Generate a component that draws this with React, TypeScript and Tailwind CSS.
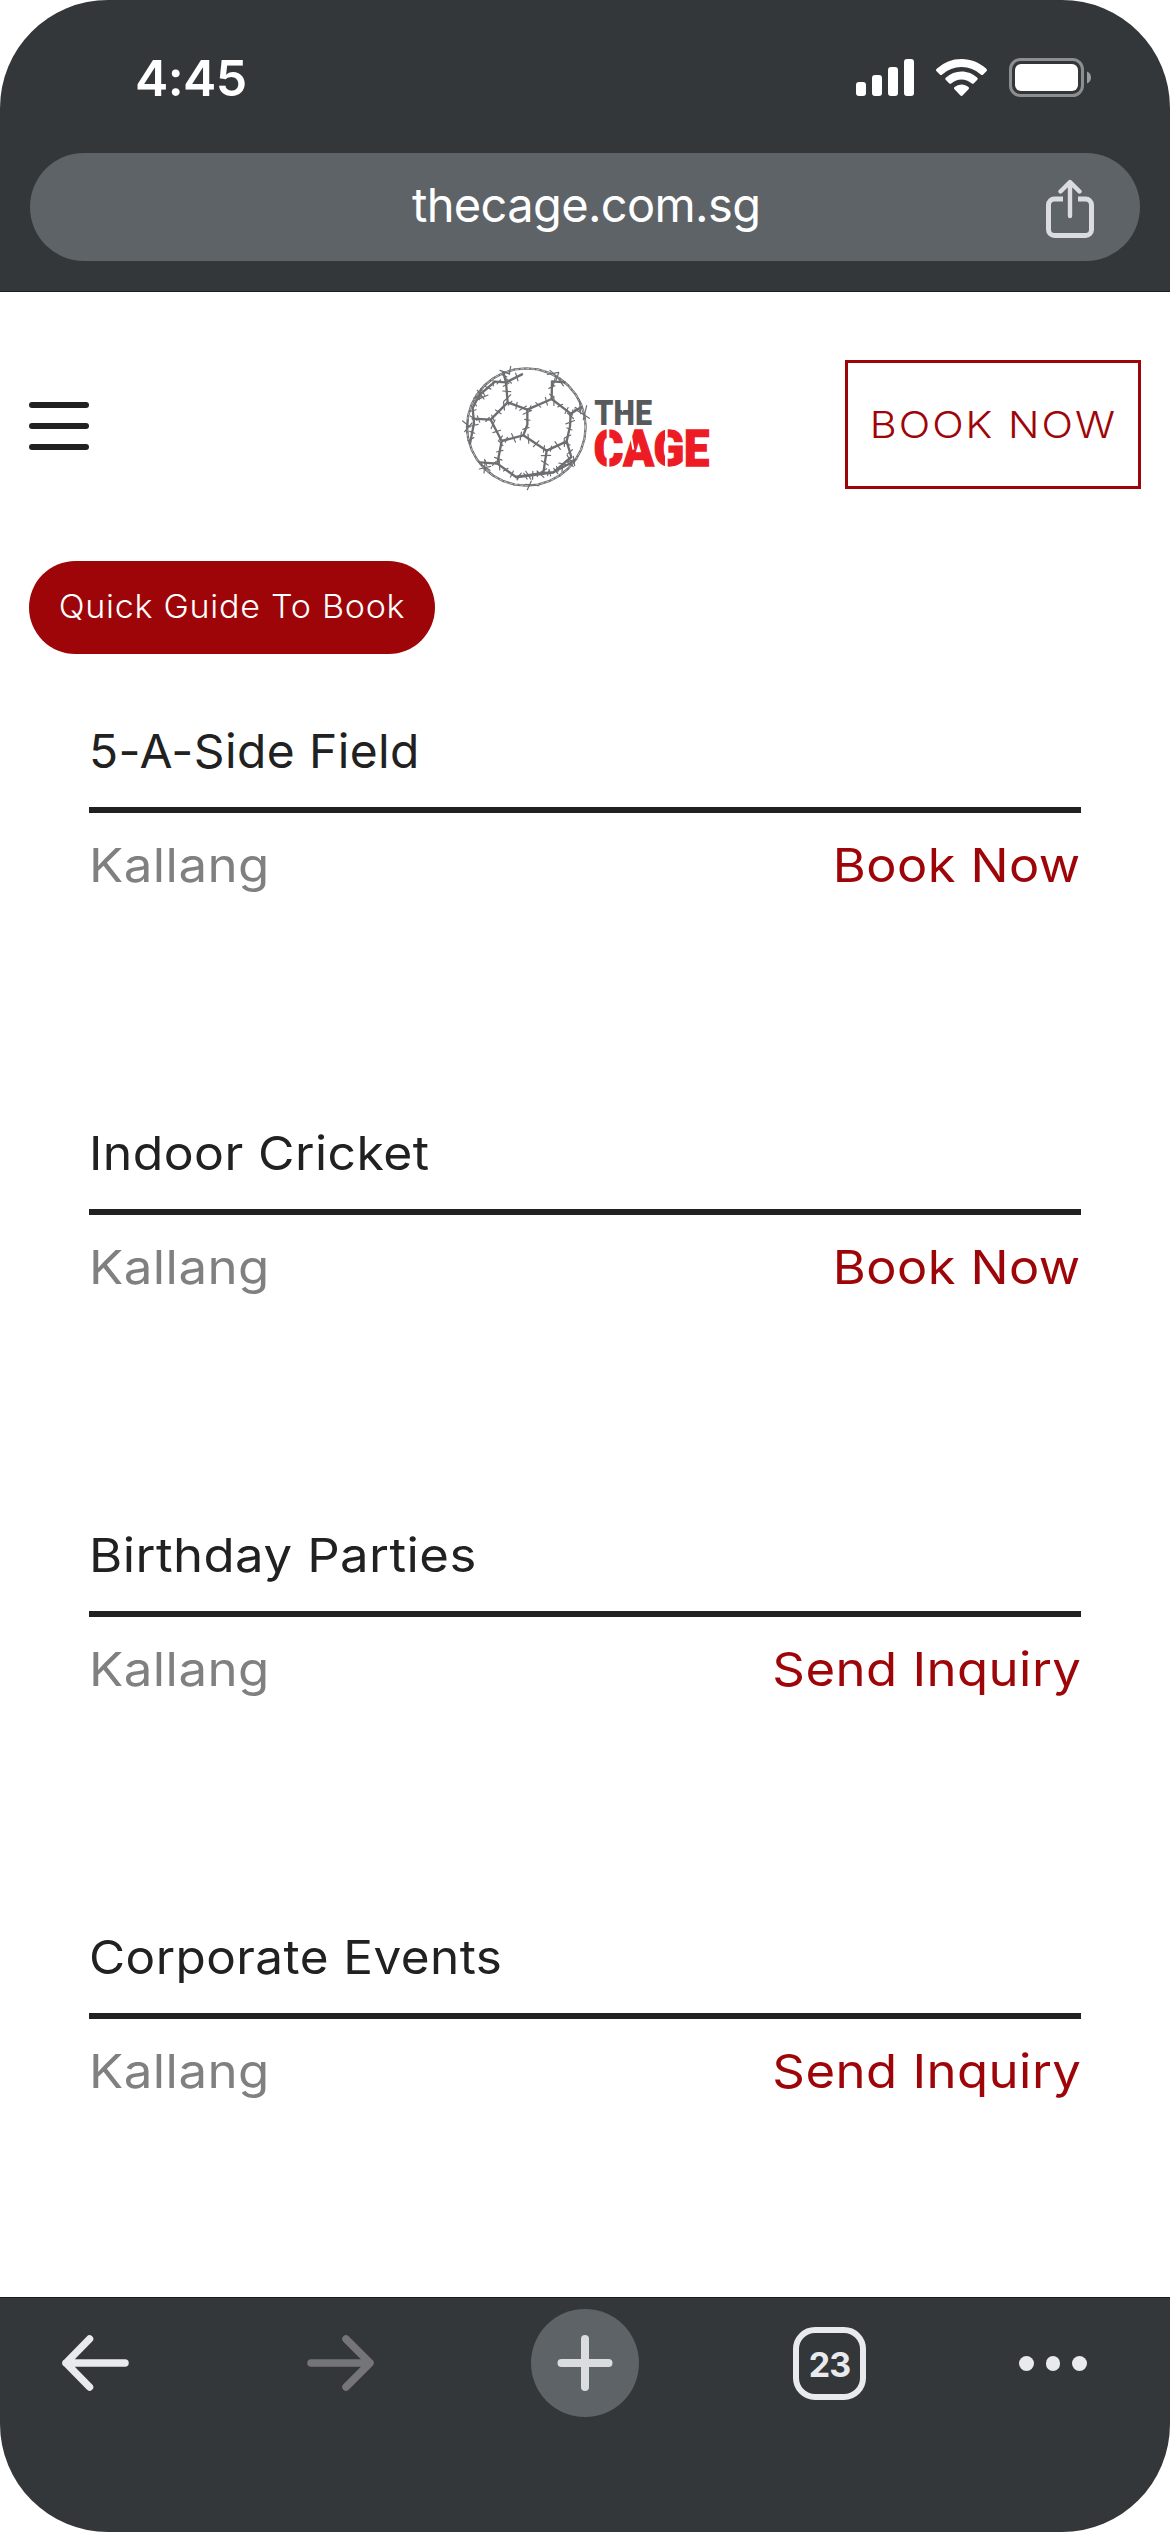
/* ============================================================================
   The Cage — mobile booking page, shown inside the phone's browser.
   ============================================================================ */

type Venue = { title: string; place: string; action: string };

const venues: Venue[] = [
  { title: "5-A-Side Field", place: "Kallang", action: "Book Now" },
  { title: "Indoor Cricket", place: "Kallang", action: "Book Now" },
  { title: "Birthday Parties", place: "Kallang", action: "Send Inquiry" },
  { title: "Corporate Events", place: "Kallang", action: "Send Inquiry" },
];

const stretch: Record<string, string> = {
  "5-A-Side Field": "scale-x-[1.02]",
  "Indoor Cricket": "scale-x-[1.062]",
  "Birthday Parties": "scale-x-[1.083]",
  "Corporate Events": "scale-x-[1.053]",
  Kallang: "scale-x-[1.086]",
  "Book Now": "scale-x-[1.075]",
  "Send Inquiry": "scale-x-[1.083]",
};

/* Seams of the ball, as polylines. */
const seams: number[][][] = [
  [[190, 98], [198, 128], [203, 188], [262, 210], [262, 255], [250, 287], [185, 304], [152, 240], [203, 188]],
  [[262, 210], [335, 178], [392, 222], [390, 260], [380, 305], [320, 333], [250, 287]],
  [[335, 178], [336, 125], [375, 128]],
  [[165, 126], [198, 128], [246, 104]],
  [[392, 222], [424, 202]],
  [[152, 240], [98, 237]],
  [[185, 304], [172, 372], [228, 412], [310, 400], [320, 333]],
  [[380, 305], [394, 352], [340, 398], [310, 400]],
  [[172, 372], [120, 368]],
  [[228, 412], [270, 408], [340, 398], [402, 365]],
  [[165, 126], [118, 166], [98, 205], [102, 250], [90, 312]],
];

const rim: number[][] = Array.from({ length: 33 }, (_, i) => {
  const a = (i / 32) * Math.PI * 2;
  return [259 + 178 * Math.cos(a), 262 + 176 * Math.sin(a)];
});

const points = (line: number[][]) => line.map((p) => p.join(",")).join(" ");

function barbs(line: number[][], step: number) {
  const out: string[] = [];
  let n = 0;
  for (let i = 1; i < line.length; i++) {
    const [x0, y0] = line[i - 1];
    const [x1, y1] = line[i];
    const len = Math.hypot(x1 - x0, y1 - y0);
    const base = Math.atan2(y1 - y0, x1 - x0);
    const count = Math.max(1, Math.round(len / step));
    for (let k = 0; k < count; k++) {
      const t = (k + 0.35) / count;
      const x = x0 + (x1 - x0) * t;
      const y = y0 + (y1 - y0) * t;
      const a = base + (n % 2 ? 1 : -1) * (0.9 + (n % 3) * 0.25);
      const r = 8 + (n % 4) * 2;
      const dx = Math.cos(a) * r;
      const dy = Math.sin(a) * r;
      out.push(`M${x - dx} ${y - dy}L${x + dx} ${y + dy}`);
      n++;
    }
  }
  return out.join("");
}

function Logo() {
  return (
    <svg viewBox="60 70 750 390" className="h-[130px] w-[250px] overflow-visible" fill="none">
      <g stroke="#6d6e71" strokeLinecap="round" strokeLinejoin="round">
        <polyline points={points(rim)} strokeWidth="7" />
        <polyline points={points(rim)} stroke="#fff" strokeWidth="1.6" strokeDasharray="9 7" />
        {seams.map((s, i) => (
          <polyline key={i} points={points(s)} strokeWidth="7" />
        ))}
        <path d={seams.map((s) => barbs(s, 24)).join("")} strokeWidth="3.6" />
        <path
          d="M212 80L208 104M180 92L206 102M330 92L352 112M322 104L356 98M356 100L348 122M112 152L132 178M108 182L144 166M122 150L118 180M68 244L90 262M74 276L96 250M84 240L80 280M418 180L422 222M404 208L448 236M440 198L430 240M120 372L150 392M118 388L152 380M136 362L132 400M262 450L274 424M256 434L296 438M400 350L404 378M384 366L410 358"
          strokeWidth="3.6"
        />
      </g>
      <text x="463" y="257" textLength="173" lengthAdjust="spacingAndGlyphs" fontFamily="Roboto, sans-serif" fontWeight="900" fontSize="105" fill="#58595b">
        THE
      </text>
      <text x="461" y="378" textLength="347" lengthAdjust="spacingAndGlyphs" fontFamily="Roboto, sans-serif" fontWeight="900" fontSize="148" fill="#ed1c24" stroke="#ed1c24" strokeWidth="4">
        CAGE
      </text>
      {/* stencil cuts */}
      <path d="M504 268V300M504 350V384M679 268V300M679 350V384" stroke="#fff" strokeWidth="8" />
      <path d="M573 288L580 330" stroke="#fff" strokeWidth="6" />
      <path d="M548 178V216M548 228V260" stroke="#fff" strokeWidth="3" />
    </svg>
  );
}

function StatusBar() {
  return (
    <div className="flex h-[153px] items-start justify-between pl-[135px] pr-[79px] pt-[48px] text-white">
      <div className="text-[50px] font-semibold leading-[60px] tracking-[-0.6px]">4:45</div>
      <svg className="mt-[6px] h-[48px] w-[236px]" viewBox="855 54 236 48" fill="#fff">
        <rect x="856" y="82" width="10" height="14" rx="3" />
        <rect x="872" y="75" width="10" height="21" rx="3" />
        <rect x="888" y="67" width="10" height="29" rx="3" />
        <rect x="904" y="59" width="10" height="37" rx="3" />
        <path d="M961.500 59c9.500 0 18.200 3.700 24.800 9.700.9.800.9 1.800.1 2.600l-3.200 3.200c-.7.700-1.600.7-2.400 0A28.500 28.500 0 0 0 961.500 67a28.500 28.500 0 0 0-19.300 7.500c-.8.700-1.700.7-2.400 0l-3.200-3.200c-.8-.8-.8-1.800.1-2.600A36.800 36.800 0 0 1 961.500 59z" />
        <path d="M961.500 71.600c6 0 11.400 2.300 15.500 6 .9.800.9 1.700.1 2.500l-3.200 3.200c-.7.700-1.500.7-2.400 0a15 15 0 0 0-20 0c-.9.700-1.700.7-2.400 0l-3.200-3.200c-.8-.8-.8-1.700.1-2.500a23 23 0 0 1 15.500-6z" />
        <path d="M961.500 84.500c2.600 0 5 .9 6.900 2.500.8.700.8 1.500.1 2.300l-5.700 6c-.8.900-1.800.9-2.600 0l-5.700-6c-.7-.8-.7-1.600.1-2.300a10.600 10.600 0 0 1 6.900-2.500z" />
        <rect x="1010.500" y="59.500" width="72" height="36" rx="10" fill="none" stroke="#8c8e90" strokeWidth="3" />
        <rect x="1015" y="64" width="63" height="27" rx="6" />
        <path d="M1087 71.500c2.500 1 4 3.300 4 6s-1.500 5-4 6z" fill="#9a9c9d" />
      </svg>
    </div>
  );
}

function AddressBar() {
  return (
    <div className="mx-[30px] flex h-[108px] items-center rounded-full bg-[#5e6367] pl-[382px] pr-[45px]">
      <span className="-mt-[5px] flex-1 whitespace-nowrap text-[47px] leading-[56px] tracking-[-0.65px] text-white">
        thecage.com.sg
      </span>
      <svg className="mt-[4px] h-[60px] w-[50px]" viewBox="1045 179 50 60" fill="none" stroke="#dadce0" strokeLinecap="round" strokeLinejoin="round">
        <path d="M1063 199h-8.500a6 6 0 0 0-6 6v24.500a6 6 0 0 0 6 6h31a6 6 0 0 0 6-6V205a6 6 0 0 0-6-6H1078" strokeWidth="5" strokeLinecap="butt" />
        <path d="M1070 216V183M1060.500 191.500L1070 182L1079.500 191.500" strokeWidth="4.400" />
      </svg>
    </div>
  );
}

function SiteHeader() {
  return (
    <header className="flex h-[197px] items-start justify-between pl-[29px] pr-[29px] pt-[68px]">
      <div className="mt-[42px] flex w-[60px] flex-col gap-[15px]">
        <span className="h-[6px] rounded-full bg-[#212121]" />
        <span className="h-[6px] rounded-full bg-[#212121]" />
        <span className="h-[6px] rounded-full bg-[#212121]" />
      </div>
      <div className="ml-[371px] mt-[3px] flex-1">
        <Logo />
      </div>
      <button className="flex h-[129px] w-[296px] items-center justify-center border-3 border-[#9e0508] text-[37px] font-light tracking-[1.8px] text-[#9e0508]">
        <span className="scale-x-[1.12] whitespace-nowrap">BOOK NOW</span>
      </button>
    </header>
  );
}

function VenueRow({ venue }: { venue: Venue }) {
  return (
    <section className="mb-[184px] h-[218px] text-[47px] leading-[60px]">
      <div className="flex h-[92px] border-b-6 border-[#212121]">
        <h2 className={`origin-left whitespace-nowrap tracking-[0.4px] text-[#212121] ${stretch[venue.title]}`}>
          {venue.title}
        </h2>
      </div>
      <div className="mt-[22px] flex justify-between tracking-[0.4px]">
        <span className={`origin-left text-[#808080] ${stretch[venue.place]}`}>{venue.place}</span>
        <a className={`origin-right text-[#9e0508] ${stretch[venue.action]}`}>{venue.action}</a>
      </div>
    </section>
  );
}

function Toolbar() {
  return (
    <nav className="h-[235px] border-t border-[#1b1c1e] bg-[#333739] pt-[11px]">
      <div className="flex h-[108px] items-center">
        <svg className="ml-[60px] h-[60px] w-[72px]" viewBox="60 2334 72 60" fill="none" stroke="#e8eaed" strokeWidth="7.500" strokeLinecap="round" strokeLinejoin="round">
          <path d="M125 2364H66M89.500 2340L66 2364L89.500 2388" />
        </svg>
        <svg className="ml-[172px] h-[60px] w-[72px]" viewBox="304 2334 72 60" fill="none" stroke="#757577" strokeWidth="7.500" strokeLinecap="round" strokeLinejoin="round">
          <path d="M311 2364H370M346 2340L370 2364L346 2388" />
        </svg>
        <div className="ml-[155px] flex size-[108px] items-center justify-center rounded-full bg-[#5e6367]">
          <svg className="size-[56px]" viewBox="0 0 56 56" fill="none" stroke="#dadce0" strokeWidth="8" strokeLinecap="round">
            <path d="M28 4V52M4.500 28H51.500" />
          </svg>
        </div>
        <div className="ml-[154px] flex size-[73px] items-center justify-center rounded-[22px] border-[6.5px] border-[#e8eaed] text-[34px] font-bold tracking-[-1px] text-[#e8eaed]">
          <span className="mt-[3px]">23</span>
        </div>
        <div className="ml-[153px] mt-[1px] flex gap-[12px]">
          <span className="size-[14.500px] rounded-full bg-[#e8eaed]" />
          <span className="size-[14.500px] rounded-full bg-[#e8eaed]" />
          <span className="size-[14.500px] rounded-full bg-[#e8eaed]" />
        </div>
      </div>
    </nav>
  );
}

export default function App() {
  return (
    <div className="h-[2532px] w-[1170px] overflow-hidden bg-white font-['Inter',sans-serif]">
      <div className="flex h-full flex-col overflow-hidden rounded-[108px] bg-white">
        <div className="h-[292px] shrink-0 border-b border-[#1b1c1e] bg-[#333739]">
          <StatusBar />
          <AddressBar />
        </div>
        <main className="flex-1 overflow-hidden">
          <SiteHeader />
          <button className="ml-[29px] mt-[72px] flex h-[93px] w-[406px] items-center justify-center rounded-full bg-[#9e0508] pb-[2px] text-[32px] font-light tracking-[0.7px] text-white">
            <span className="scale-x-[1.063] whitespace-nowrap">Quick Guide To Book</span>
          </button>
          <div className="px-[89px] pt-[67px]">
            {venues.map((v) => (
              <VenueRow key={v.title} venue={v} />
            ))}
          </div>
        </main>
        <Toolbar />
      </div>
    </div>
  );
}
